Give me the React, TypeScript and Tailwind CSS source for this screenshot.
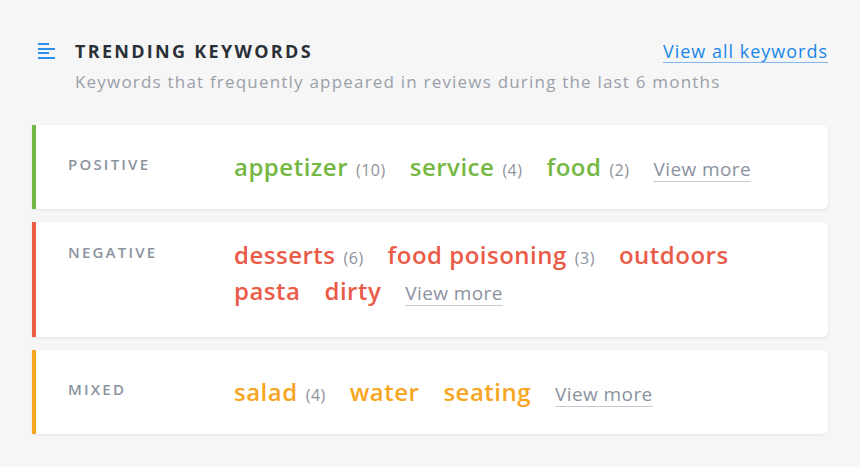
import React from "react";

type Keyword = { word: string; count?: number };
type Group = {
  label: string;
  bar: string;
  text: string;
  pad: string;
  keywords: Keyword[];
};

const groups: Group[] = [
  {
    label: "POSITIVE",
    bar: "border-[#74b843]",
    text: "text-[#74b843]",
    pad: "pt-[24px] pb-[24px]",
    keywords: [
      { word: "appetizer", count: 10 },
      { word: "service", count: 4 },
      { word: "food", count: 2 },
    ],
  },
  {
    label: "NEGATIVE",
    bar: "border-[#ea5b48]",
    text: "text-[#ea5b48]",
    pad: "pt-[15px] pb-[28px]",
    keywords: [
      { word: "desserts", count: 6 },
      { word: "food poisoning", count: 3 },
      { word: "outdoors" },
      { word: "pasta" },
      { word: "dirty" },
    ],
  },
  {
    label: "MIXED",
    bar: "border-[#f6a623]",
    text: "text-[#f6a623]",
    pad: "pt-[24px] pb-[24px]",
    keywords: [{ word: "salad", count: 4 }, { word: "water" }, { word: "seating" }],
  },
];

function ListIcon() {
  return (
    <svg width="18" height="17" viewBox="0 0 18 17" className="shrink-0">
      <rect x="0" y="1" width="11" height="2" fill="#2c8ff0" />
      <rect x="0" y="6" width="17" height="2" fill="#2c8ff0" />
      <rect x="0" y="10" width="11" height="2" fill="#2c8ff0" />
      <rect x="0" y="15" width="17" height="2" fill="#2c8ff0" />
    </svg>
  );
}

function KeywordCard({ group }: { group: Group }) {
  return (
    <div
      className={`flex rounded-r-[6px] border-l-4 bg-white pl-[32px] pr-[32px] shadow-[0_1px_3px_rgba(0,0,0,0.08)] ${group.bar} ${group.pad}`}
    >
      <div className="mt-[-3px] w-[166px] shrink-0 text-[15px] font-semibold leading-[36px] tracking-[2.2px] text-[#8c93a0]">
        {group.label}
      </div>
      <div className="flex flex-1 flex-wrap items-baseline gap-x-[24px]">
        {group.keywords.map((k) => (
          <span key={k.word} className="inline-flex items-baseline gap-[8px]">
            <span className={`text-[24px] font-semibold leading-[36px] tracking-[0.5px] ${group.text}`}>
              {k.word}
            </span>
            {k.count !== undefined && (
              <span className="text-[16px] leading-none tracking-[0.5px] text-[#8d929c]">({k.count})</span>
            )}
          </span>
        ))}
        <a className="text-[19px] leading-none tracking-[0.4px] text-[#8a92a0] underline decoration-[#c6cad1] underline-offset-[5px]">
          View more
        </a>
      </div>
    </div>
  );
}

export default function App() {
  return (
    <div
      className="min-h-[467px] w-[860px] bg-[#f6f6f6] pl-[32px] pr-[32px] pt-[38px]"
      style={{ fontFamily: '"Open Sans", "Liberation Sans", sans-serif' }}
    >
      <div className="flex items-start">
        <div className="ml-[6px] mt-[4px]">
          <ListIcon />
        </div>
        <div className="ml-[19px] flex-1">
          <div className="flex items-baseline justify-between">
            <h2 className="text-[18px] font-bold tracking-[2.3px] text-[#2b2f38]">TRENDING KEYWORDS</h2>
            <a className="text-[18px] tracking-[1px] text-[#1b86e8] underline decoration-[#7fb8ef] underline-offset-[4px]">
              View all keywords
            </a>
          </div>
          <p className="mt-[4px] text-[17px] tracking-[1.2px] text-[#9aa0aa]">
            Keywords that frequently appeared in reviews during the last 6 months
          </p>
        </div>
      </div>
      <div className="mt-[30px] flex flex-col gap-[13px]">
        {groups.map((g) => (
          <KeywordCard key={g.label} group={g} />
        ))}
      </div>
    </div>
  );
}
